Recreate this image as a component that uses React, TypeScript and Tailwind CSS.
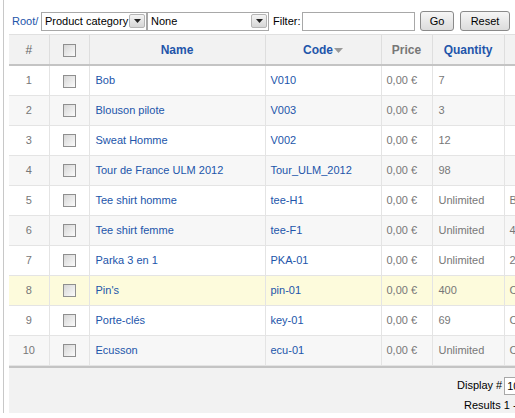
import React from 'react';

type Product = {
  id: number;
  name: string;
  code: string;
  price: string;
  qty: string;
  extra: string;
};

const products: Product[] = [
  { id: 1, name: 'Bob', code: 'V010', price: '0,00 €', qty: '7', extra: '' },
  { id: 2, name: 'Blouson pilote', code: 'V003', price: '0,00 €', qty: '3', extra: '' },
  { id: 3, name: 'Sweat Homme', code: 'V002', price: '0,00 €', qty: '12', extra: '' },
  { id: 4, name: 'Tour de France ULM 2012', code: 'Tour_ULM_2012', price: '0,00 €', qty: '98', extra: '' },
  { id: 5, name: 'Tee shirt homme', code: 'tee-H1', price: '0,00 €', qty: 'Unlimited', extra: 'B' },
  { id: 6, name: 'Tee shirt femme', code: 'tee-F1', price: '0,00 €', qty: 'Unlimited', extra: '4' },
  { id: 7, name: 'Parka 3 en 1', code: 'PKA-01', price: '0,00 €', qty: 'Unlimited', extra: '2' },
  { id: 8, name: "Pin's", code: 'pin-01', price: '0,00 €', qty: '400', extra: 'C' },
  { id: 9, name: 'Porte-clés', code: 'key-01', price: '0,00 €', qty: '69', extra: 'C' },
  { id: 10, name: 'Ecusson', code: 'ecu-01', price: '0,00 €', qty: 'Unlimited', extra: 'C' },
];

function Checkbox() {
  return (
    <span className="inline-block w-[13px] h-[13px] border border-[#8f8f8f] bg-gradient-to-br from-[#d6d6d6] to-[#fbfbfb] align-middle" />
  );
}

function SelectArrow() {
  return (
    <span className="flex items-center justify-center w-[16px] h-[14px] border border-[#b5b5b5] bg-gradient-to-b from-[#f4f4f4] to-[#d6d6d6] rounded-[2px]">
      <svg width="7" height="4" viewBox="0 0 7 4">
        <path d="M0 0h7L3.5 4z" fill="#222" />
      </svg>
    </span>
  );
}

function Select({ label, width }: { label: string; width: string }) {
  return (
    <div className={`flex items-center justify-between h-[19px] border border-[#a8a8a8] bg-white pl-[3px] pr-[1px] ${width}`}>
      <span className="text-black">{label}</span>
      <SelectArrow />
    </div>
  );
}

function Button({ children, width }: { children: React.ReactNode; width: string }) {
  return (
    <button className={`h-[20px] border border-[#8a8a8a] rounded-[3px] bg-gradient-to-b from-[#f6f6f6] to-[#dcdcdc] text-black ${width}`}>
      {children}
    </button>
  );
}

export default function App() {
  return (
    <div className="w-[515px] h-[418px] overflow-hidden bg-white font-['Liberation_Sans',Arial,sans-serif] text-[11px]">
      <div className="ml-[3px] h-[413px] border-l border-[#c8c8c8] pl-[5px] pt-[11px] flex flex-col">
        {/* Toolbar */}
        <div className="flex items-center h-[20px] whitespace-nowrap">
          <span className="text-[#2255aa] ml-[3px] w-[29px]">Root/</span>
          <Select label="Product category" width="w-[106px]" />
          <Select label="None" width="w-[122px]" />
          <span className="ml-[4px] w-[29px] text-black">Filter:</span>
          <div className="w-[113px] h-[19px] border border-[#a8a8a8] bg-white" />
          <Button width="w-[34px] ml-[5px]">Go</Button>
          <Button width="w-[50px] ml-[6px]">Reset</Button>
        </div>

        {/* Table */}
        <div className="mt-[3px] w-[640px] border-t border-[#e0e0e0]">
          <table className="table-fixed border-collapse w-[640px]">
            <colgroup>
              <col className="w-[40px]" />
              <col className="w-[40px]" />
              <col className="w-[176px]" />
              <col className="w-[116px]" />
              <col className="w-[51px]" />
              <col className="w-[72px]" />
              <col className="w-[145px]" />
            </colgroup>
            <thead>
              <tr className="h-[30px] bg-[#f2f2f2] border-b-2 border-[#c4c4c4] text-[12px]">
                <th className="font-normal text-[#666] border-r border-[#dedede]">#</th>
                <th className="border-r border-[#dedede]">
                  <Checkbox />
                </th>
                <th className="font-bold text-[#2255aa] border-r border-[#dedede]">Name</th>
                <th className="font-bold text-[#2255aa] border-r border-[#dedede]">
                  Code
                  <svg width="9" height="5" viewBox="0 0 9 5" className="inline-block ml-[1px] align-middle">
                    <path d="M0 0h9L4.5 5z" fill="#999" />
                  </svg>
                </th>
                <th className="font-bold text-[#777] border-r border-[#dedede]">Price</th>
                <th className="font-bold text-[#2255aa] border-r border-[#dedede]">Quantity</th>
                <th />
              </tr>
            </thead>
            <tbody>
              {products.map((p) => (
                <tr
                  key={p.id}
                  className={`h-[30px] border-b border-[#e4e4e4] ${
                    p.id === 8 ? 'bg-[#fdfbdc]' : p.id % 2 === 0 ? 'bg-[#f7f7f7]' : 'bg-white'
                  }`}
                >
                  <td className="text-center text-[#777] border-r border-[#e4e4e4]">{p.id}</td>
                  <td className="text-center border-r border-[#e4e4e4]">
                    <Checkbox />
                  </td>
                  <td className="pl-[6px] text-[#2255aa] border-r border-[#e4e4e4] whitespace-nowrap">{p.name}</td>
                  <td className="pl-[5px] text-[#2255aa] border-r border-[#e4e4e4] whitespace-nowrap">{p.code}</td>
                  <td className="pl-[5px] text-[#777] border-r border-[#e4e4e4] whitespace-nowrap">{p.price}</td>
                  <td className="pl-[6px] text-[#777] border-r border-[#e4e4e4] whitespace-nowrap">{p.qty}</td>
                  <td className="pl-[5px] text-[#777]">{p.extra}</td>
                </tr>
              ))}
            </tbody>
          </table>
        </div>

        {/* Footer */}
        <div className="w-[640px] h-[48px] bg-[#f2f2f2] border-t-2 border-[#c4c4c4] relative">
          <div className="absolute left-[448px] top-[9px] flex items-center whitespace-nowrap text-black">
            <span>Display #</span>
            <div className="ml-[2px] w-[40px] h-[18px] border border-[#a8a8a8] bg-white pl-[2px] leading-[16px]">10</div>
          </div>
          <div className="absolute left-[455px] top-[29px] whitespace-nowrap text-black">Results 1 - 10 of 10</div>
        </div>
      </div>
    </div>
  );
}
